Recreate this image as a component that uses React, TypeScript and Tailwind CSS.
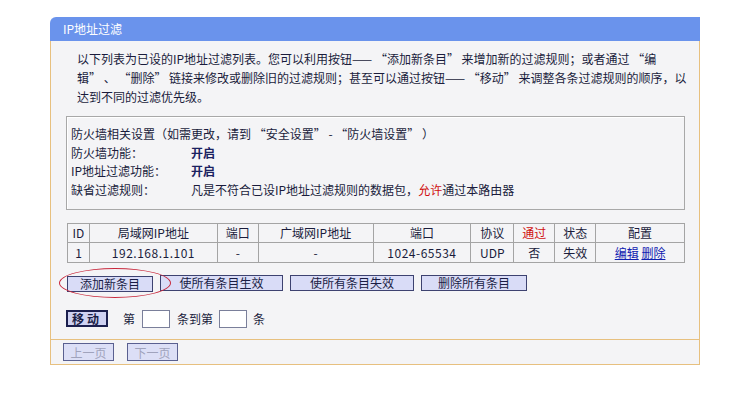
import React from "react";

const cols = [
  { label: "ID", w: "w-[22px]" },
  { label: "局域网IP地址", w: "w-[128px]" },
  { label: "端口", w: "w-[41px]" },
  { label: "广域网IP地址", w: "w-[115px]" },
  { label: "端口", w: "w-[98px]" },
  { label: "协议", w: "w-[43px]" },
  { label: "通过", w: "w-[41px]", red: true },
  { label: "状态", w: "w-[41px]" },
  { label: "配置", w: "w-[89px]" },
];

function Btn({ children, w }: { children: React.ReactNode; w: string }) {
  return (
    <button
      className={`${w} h-[16px] border border-[#3d4270] bg-[#d9dcf7] text-[12px] leading-[14px] text-[#1a1d45]`}
    >
      {children}
    </button>
  );
}

export default function App() {
  return (
    <div className="w-[750px] h-[402px] bg-white font-['SimSun','Noto_Sans_CJK_SC',sans-serif] text-[12px] text-[#1a1c3c]">
      <div className="ml-[50px] pt-[17px] w-[650px]">
        {/* Header */}
        <div className="h-[24px] rounded-tl-[6px] bg-[#6a93ec] pl-[13px] flex items-center text-white text-[12px]">
          IP地址过滤
        </div>

        {/* Body */}
        <div className="border-x border-b border-[#e7c07f] bg-[#f4f4f6]">
          <p className="pl-[26px] pt-[8px] leading-[19px] whitespace-nowrap">
            以下列表为已设的IP地址过滤列表。您可以利用按钮—— “添加新条目” 来增加新的过滤规则；或者通过 “编
            <br />
            辑” 、 “删除” 链接来修改或删除旧的过滤规则；甚至可以通过按钮—— “移动” 来调整各条过滤规则的顺序，以
            <br />
            达到不同的过滤优先级。
          </p>

          {/* Firewall settings */}
          <div className="ml-[15px] mt-[10px] w-[619px] border border-[#a8a8a8] shadow-[inset_1px_1px_0_#fff] pl-[4px] pt-[8px] pb-[10px] leading-[18.5px]">
            <div>防火墙相关设置（如需更改，请到 “安全设置” - “防火墙设置” ）</div>
            <div className="flex">
              <span className="w-[120px]">防火墙功能：</span>
              <span className="font-bold text-[#1a2160]">开启</span>
            </div>
            <div className="flex">
              <span className="w-[120px]">IP地址过滤功能：</span>
              <span className="font-bold text-[#1a2160]">开启</span>
            </div>
            <div className="flex">
              <span className="w-[120px]">缺省过滤规则：</span>
              <span>
                凡是不符合已设IP地址过滤规则的数据包，<span className="text-[#d01010]">允许</span>通过本路由器
              </span>
            </div>
          </div>

          {/* Table */}
          <table className="ml-[16px] mt-[13px] w-[618px] border-collapse border border-[#9c9c9c] text-center">
            <thead>
              <tr className="h-[19px]">
                {cols.map((c, i) => (
                  <th
                    key={i}
                    className={`${c.w} border border-[#a4a4a4] font-normal p-0 ${c.red ? "text-[#d01010]" : ""}`}
                  >
                    {c.label}
                  </th>
                ))}
              </tr>
            </thead>
            <tbody>
              <tr className="h-[20px]">
                <td className="border border-[#a4a4a4] p-0">1</td>
                <td className="border border-[#a4a4a4] p-0 tracking-[0.5px]">192.168.1.101</td>
                <td className="border border-[#a4a4a4] p-0">-</td>
                <td className="border border-[#a4a4a4] p-0">-</td>
                <td className="border border-[#a4a4a4] p-0 tracking-[0.5px]">1024-65534</td>
                <td className="border border-[#a4a4a4] p-0">UDP</td>
                <td className="border border-[#a4a4a4] p-0">否</td>
                <td className="border border-[#a4a4a4] p-0">失效</td>
                <td className="border border-[#a4a4a4] p-0">
                  <span className="underline text-[#1020b0]">编辑</span>{" "}
                  <span className="underline text-[#1020b0]">删除</span>
                </td>
              </tr>
            </tbody>
          </table>

          {/* Action buttons */}
          <div className="ml-[16px] mt-[12px] flex gap-[7px]">
            <div className="relative">
              <Btn w="w-[86px]">添加新条目</Btn>
              <div className="absolute left-[-8px] top-[-7px] w-[112px] h-[30px] rounded-[50%] border border-[#c8283c] pointer-events-none" />
            </div>
            <Btn w="w-[123px]">使所有条目生效</Btn>
            <Btn w="w-[124px]">使所有条目失效</Btn>
            <Btn w="w-[106px]">删除所有条目</Btn>
          </div>

          {/* Move row */}
          <div className="ml-[15px] mt-[17px] flex items-center h-[17px]">
            <button className="w-[42px] h-[17px] border-2 border-[#1b1f4e] bg-[#cfd2f2] font-bold text-[12px] leading-[13px] tracking-[3px] text-[#1a1d45]">
              移动
            </button>
            <span className="ml-[15px]">第</span>
            <span className="ml-[7px] w-[28px] h-[18px] border border-[#7a7f9a] bg-white" />
            <span className="ml-[7px]">条到第</span>
            <span className="ml-[6px] w-[28px] h-[18px] border border-[#7a7f9a] bg-white" />
            <span className="ml-[6px]">条</span>
          </div>

          {/* Pager */}
          <div className="mt-[12px] border-t border-[#e7c07f] flex gap-[13px] pl-[12px] pt-[3px] pb-[3px]">
            <button className="w-[51px] h-[18px] border border-[#5a6090] bg-[#dcdff6] text-[12px] text-[#a0a3bc]">
              上一页
            </button>
            <button className="w-[51px] h-[18px] border border-[#5a6090] bg-[#dcdff6] text-[12px] text-[#a0a3bc]">
              下一页
            </button>
          </div>
        </div>
      </div>
    </div>
  );
}
